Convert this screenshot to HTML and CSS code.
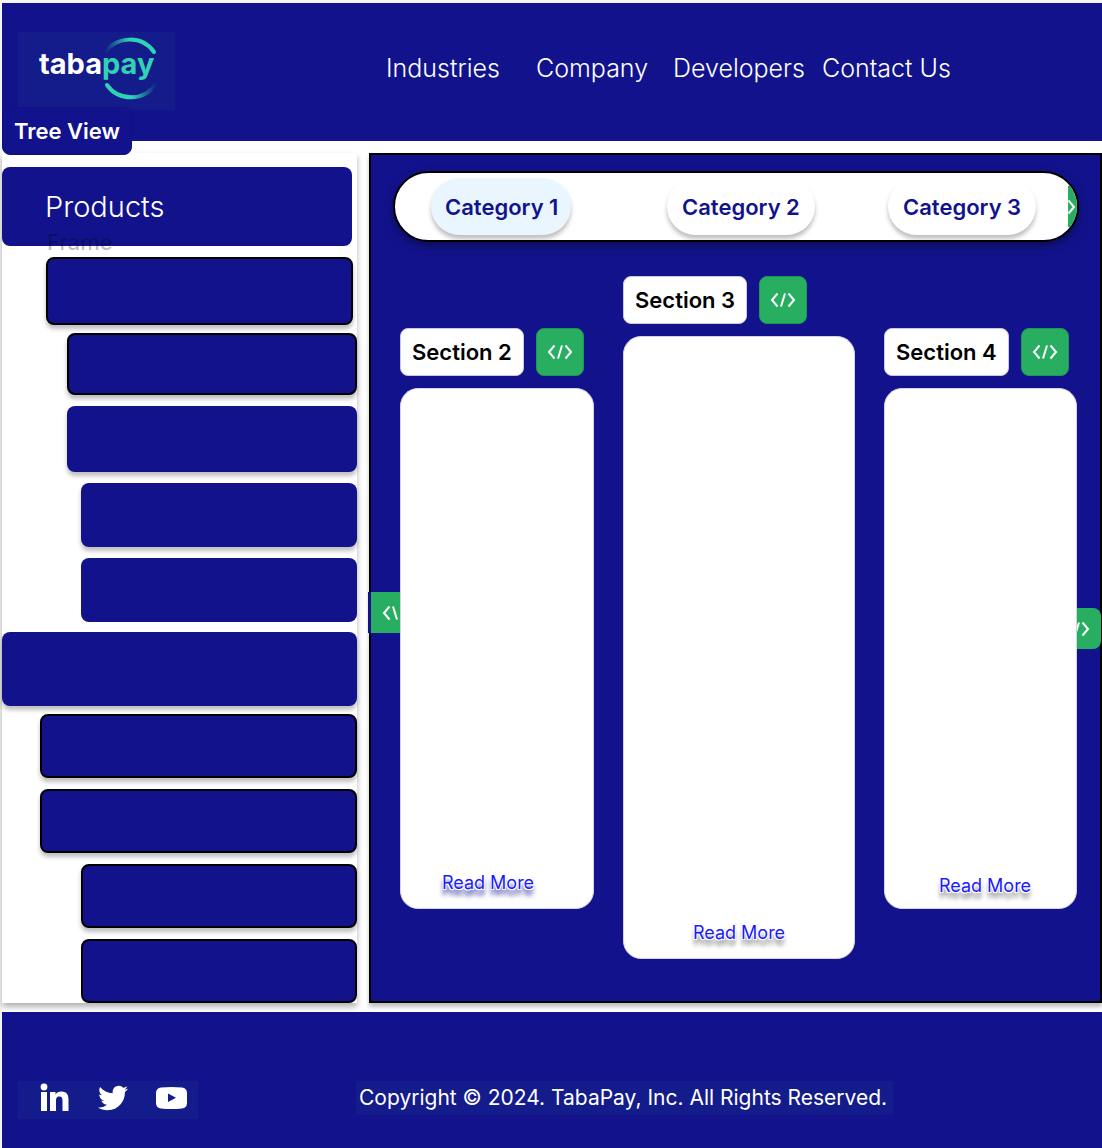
FILE: index.html
```html
<!DOCTYPE html>
<html lang="en">
<head>
<meta charset="utf-8">
<meta name="viewport" content="width=device-width, initial-scale=1">
<title>TabaPay</title>
<link rel="stylesheet" href="styles.css">
</head>
<body>
<svg class="defs" width="0" height="0" aria-hidden="true">
  <symbol id="code" viewBox="0 0 26 16">
    <path d="M7.500 1.500 2 8l5.500 6.500M18.500 1.500 24 8l-5.500 6.500M15 1.500 11 14.500" fill="none" stroke="currentColor" stroke-width="2"/>
  </symbol>
</svg>
<div class="page">
  <header class="header">
    <a class="logo" href="#" aria-label="TabaPay home">
      <svg viewBox="0 0 157 78" width="157" height="78">
        <defs>
          <linearGradient id="arc-top" x1="0" x2="1"><stop offset="0" stop-color="#2fd3b4" stop-opacity="0"/><stop offset=".5" stop-color="#2fd3b4"/></linearGradient>
          <linearGradient id="arc-bottom" x1="0" x2="1"><stop offset=".5" stop-color="#2fd3b4"/><stop offset="1" stop-color="#2fd3b4" stop-opacity="0"/></linearGradient>
        </defs>
        <path d="M87 20C99 4 124 3 136 20" fill="none" stroke="url(#arc-top)" stroke-width="4" stroke-linecap="round"/>
        <path d="M89 53C100 69 126 70 138 52" fill="none" stroke="url(#arc-bottom)" stroke-width="4" stroke-linecap="round"/>
        <text class="logo-text" x="21" y="42">taba<tspan class="logo-pay">pay</tspan></text>
      </svg>
    </a>
    <nav class="nav">
      <a href="#">Industries</a>
      <a href="#">Company</a>
      <a href="#">Developers</a>
      <a href="#">Contact Us</a>
    </nav>
    <button class="tree-tab" type="button">Tree View</button>
  </header>

  <main class="main">
    <aside class="sidebar">
      <h1 class="node node-title">Products</h1>
      <span class="frame-label">Frame</span>
      <div class="node node-first outlined raised"></div>
      <div class="node level-2 tight short outlined raised"></div>
      <div class="node level-2 tall raised"></div>
      <div class="node level-3 raised"></div>
      <div class="node level-3"></div>
      <div class="node node-root raised"></div>
      <div class="node level-1 tight outlined raised"></div>
      <div class="node level-1 outlined raised"></div>
      <div class="node level-3 outlined raised"></div>
      <div class="node level-3 outlined"></div>
    </aside>

    <section class="panel">
      <div class="categories">
        <button class="chip active" type="button">Category 1</button>
        <button class="chip" type="button">Category 2</button>
        <button class="chip" type="button">Category 3</button>
        <button class="peek" type="button" aria-label="More categories"><svg width="26" height="16"><use href="#code"/></svg></button>
      </div>

      <button class="edge edge-left" type="button" aria-label="Previous"><svg width="26" height="16"><use href="#code"/></svg></button>
      <button class="edge edge-right" type="button" aria-label="Next"><svg width="26" height="16"><use href="#code"/></svg></button>

      <div class="sections">
        <article class="section">
          <div class="section-head">
            <h2 class="label">Section 2</h2>
            <button class="code" type="button" aria-label="Code for section 2"><svg width="26" height="16"><use href="#code"/></svg></button>
          </div>
          <div class="card card-a"><a class="more more-blue" href="#">Read More</a></div>
        </article>
        <article class="section featured">
          <div class="section-head">
            <h2 class="label">Section 3</h2>
            <button class="code" type="button" aria-label="Code for section 3"><svg width="26" height="16"><use href="#code"/></svg></button>
          </div>
          <div class="card"><a class="more" href="#">Read More</a></div>
        </article>
        <article class="section">
          <div class="section-head">
            <h2 class="label">Section 4</h2>
            <button class="code" type="button" aria-label="Code for section 4"><svg width="26" height="16"><use href="#code"/></svg></button>
          </div>
          <div class="card card-c"><a class="more" href="#">Read More</a></div>
        </article>
      </div>
    </section>
  </main>

  <footer class="footer">
    <div class="social">
      <a href="#" aria-label="LinkedIn"><svg width="30" height="30" viewBox="0 0 30 30" fill="#fff"><circle cx="4" cy="4" r="3.400"/><path d="M1 9h6v19H1zM10 9h5.500v2.500c1-1.800 3-3 6-3 5.500 0 7 3.500 7 8.500v11h-6V18c0-2.500-.5-4.500-3-4.500-3 0-3.500 2-3.500 4.500v10h-6z"/></svg></a>
      <a href="#" aria-label="Twitter"><svg width="30" height="30" viewBox="0 0 512 512" fill="#fff"><path d="M459.370 151.716c.325 4.548.325 9.097.325 13.645 0 138.720-105.583 298.558-298.558 298.558-59.452 0-114.680-17.219-161.137-47.106 8.447.974 16.568 1.299 25.340 1.299 49.055 0 94.213-16.568 130.274-44.832-46.132-.975-84.792-31.188-98.112-72.772 6.498.974 12.995 1.624 19.818 1.624 9.421 0 18.843-1.300 27.614-3.573-48.081-9.747-84.143-51.980-84.143-102.985v-1.299c13.969 7.797 30.214 12.670 47.431 13.319-28.264-18.843-46.781-51.005-46.781-87.391 0-19.492 5.197-37.360 14.294-52.954 51.655 63.675 129.300 105.258 216.365 109.807-1.624-7.797-2.599-15.918-2.599-24.040 0-57.828 46.782-104.934 104.934-104.934 30.213 0 57.502 12.670 76.670 33.137 23.715-4.548 46.456-13.320 66.599-25.340-7.798 24.366-24.366 44.833-46.132 57.827 21.117-2.273 41.584-8.122 60.426-16.243-14.292 20.791-32.161 39.308-52.628 54.253z"/></svg></a>
      <a href="#" aria-label="YouTube"><svg width="31" height="30" viewBox="0 0 31 30"><path d="M5 4.500Q15.500 3.500 26 4.500Q30.500 5 31 9.500Q31.400 15 31 20.500Q30.500 25 26 25.500Q15.500 26.500 5 25.500Q.5 25 0 20.500Q-.4 15 0 9.500Q.5 5 5 4.500Z" fill="#fff"/><path d="M12 10.500v8.500l8-4.200z" fill="#141b8a"/></svg></a>
    </div>
    <p class="copyright">Copyright © 2024. TabaPay, Inc. All Rights Reserved.</p>
  </footer>
</div>
</body>
</html>
```

FILE: styles.css
```css
:root {
  --navy: #12138c;
  --navy-soft: #141b8a;
  --green: #27ae60;
}

* { box-sizing: border-box; }

body {
  margin: 0;
  padding: 3px 0 0 2px;
  background: #f5f5f5;
  font-family: Inter, "Liberation Sans", sans-serif;
}

h1, h2, p { margin: 0; }
a { color: inherit; text-decoration: none; }
button { border: 0; padding: 0; font: inherit; cursor: pointer; }
svg { display: block; flex: none; }
.defs { position: absolute; }

.page {
  display: flex;
  flex-direction: column;
  min-height: calc(100vh - 3px);
  background: #fff;
}

/* Header */
.header {
  position: relative;
  z-index: 1;
  display: flex;
  align-items: flex-start;
  gap: 211px;
  min-height: 138px;
  padding: 29px 16px 0;
  background: var(--navy);
}

.logo { background: var(--navy-soft); }
.logo-text { font: 700 29px Inter, sans-serif; fill: #fff; }
.logo-pay { fill: #2fd3b4; }

.nav {
  display: grid;
  grid-template-columns: 150px 137px 149px auto;
  padding-top: 20px;
  color: #fff;
  font-size: 25px;
  font-weight: 350;
  line-height: 32px;
  white-space: nowrap;
}

.tree-tab {
  position: absolute;
  left: 0;
  top: 104px;
  height: 48px;
  padding: 0 11px;
  border: 1px solid #11127f;
  border-radius: 8px;
  background: var(--navy);
  color: #fff;
  font-size: 22px;
  font-weight: 600;
}

/* Two columns */
.main {
  display: grid;
  grid-template-columns: 355px 1fr;
  gap: 12px;
  padding: 12px 0 9px;
}

.sidebar {
  position: relative;
  display: flex;
  flex-direction: column;
  padding-top: 14px;
  background: #fff;
  box-shadow: 0 4px 6px rgba(0, 0, 0, .3);
}

.node {
  height: 64px;
  margin-top: 11px;
  border-radius: 8px;
  background: var(--navy);
}

.node-title {
  height: 79px;
  margin: 0 5px 0 0;
  padding-left: 43px;
  color: #fff;
  font-size: 29px;
  font-weight: 350;
  line-height: 80px;
}

.node-first { height: 68px; margin: 11px 4px 0 44px; }
.node-root { height: 74px; margin-top: 10px; }
.level-1 { margin-left: 38px; }
.level-2 { margin-left: 65px; }
.level-3 { margin-left: 79px; }
.tight { margin-top: 8px; }
.short { height: 62px; }
.tall { height: 66px; }
.outlined { border: 2px solid #000; }
.raised { box-shadow: 0 4px 4px rgba(0, 0, 0, .25); }

.frame-label {
  position: absolute;
  left: 45px;
  top: 76px;
  color: rgba(0, 0, 0, .25);
  font-size: 22px;
  font-weight: 500;
  line-height: 26px;
}

/* Content panel */
.panel {
  position: relative;
  padding: 16px 21px 42px 22px;
  border: 2px solid #000;
  background: var(--navy);
  box-shadow: 0 4px 4px rgba(0, 0, 0, .25);
}

.categories {
  display: grid;
  grid-template-columns: 236fr 221fr 180fr 9px;
  align-items: center;
  justify-items: start;
  height: 71px;
  padding-left: 36px;
  overflow: hidden;
  border: 2px solid #000;
  border-radius: 36px;
  background: #fff;
  box-shadow: 0 4px 10px rgba(0, 0, 0, .4);
}

.chip {
  height: 57px;
  padding: 0 15px;
  border-radius: 29px;
  background: #fff;
  box-shadow: 0 4px 4px rgba(0, 0, 0, .25);
  color: var(--navy);
  font-size: 22px;
  font-weight: 600;
  white-space: nowrap;
}

.chip.active { padding: 0 13px 0 14px; background: #e9f6ff; }

.peek, .edge, .code {
  display: flex;
  align-items: center;
  justify-content: center;
  background: var(--green);
  color: #fff;
}

.peek {
  justify-content: flex-end;
  width: 9px;
  height: 41px;
  padding-right: 1px;
  overflow: hidden;
}

.edge {
  position: absolute;
  width: 48px;
  height: 41px;
}

.edge-left {
  left: -3px;
  top: 437px;
  width: 51px;
  border-left: 3px solid var(--navy);
}

.edge-left svg { transform: scaleX(-1); }

.edge-right {
  right: -1px;
  top: 453px;
  border-radius: 0 8px 8px 0;
}

.sections {
  position: relative;
  display: grid;
  grid-template-columns: 194fr 232fr 193fr;
  align-items: start;
  gap: 29px;
  padding: 34px 2px 0 7px;
}

.section { padding-top: 52px; }
.featured { padding-top: 0; }

.section-head {
  display: flex;
  gap: 12px;
  margin-bottom: 12px;
}

.label, .code {
  height: 48px;
  border: 1px solid #c9c9dd;
  border-radius: 8px;
}

.label {
  padding: 0 11px;
  background: #fff;
  color: #000;
  font-size: 22px;
  font-weight: 600;
  line-height: 47px;
  white-space: nowrap;
}

.code { width: 48px; border-color: #209653; }

.card {
  display: flex;
  flex-direction: column;
  align-items: center;
  justify-content: flex-end;
  height: 521px;
  padding-bottom: 13px;
  border: 1px solid #d3d3e3;
  border-radius: 18px;
  background: #fff;
}

.featured .card { height: 623px; }
.card-a { padding-right: 18px; }
.card-c { padding: 0 0 10px 9px; }

.more {
  color: #1b1bff;
  font-size: 18px;
  line-height: 24px;
  text-shadow: 1px 1px 0 #fff, -1px 1px 0 #fff, 0 5px 4px rgba(0, 0, 0, .3), 0 7px 4px rgba(0, 0, 0, .3);
}

.more-blue {
  text-shadow: 1px 1px 0 #fff, -1px 1px 0 #fff, 0 5px 4px rgba(18, 19, 140, .5), 0 7px 4px rgba(18, 19, 140, .5);
}

/* Footer */
.footer {
  display: flex;
  flex: 1;
  align-items: flex-start;
  gap: 158px;
  min-height: 136px;
  padding: 69px 16px 0;
  background: var(--navy);
}

.social {
  display: flex;
  gap: 28px;
  width: 180px;
  height: 38px;
  padding: 2px 0 0 22px;
  background: var(--navy-soft);
}

.copyright {
  padding: 0 6px 0 3px;
  background: var(--navy-soft);
  color: #fff;
  font-size: 21px;
  line-height: 34px;
}
```
